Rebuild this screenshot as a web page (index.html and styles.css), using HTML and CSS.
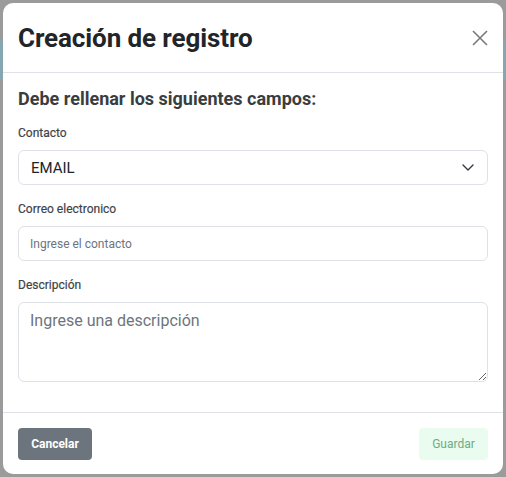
FILE: index.html
```html
<!DOCTYPE html>
<html lang="es">
<head>
<meta charset="utf-8">
<title>Creación de registro</title>
<link rel="stylesheet" href="styles.css">
</head>
<body>
<div class="modal">
  <div class="modal-header">
    <h1 class="modal-title">Creación de registro</h1>
    <button class="close" type="button" aria-label="Cerrar">
      <svg width="16" height="16" viewBox="0 0 16 16"><path d="M1 1L15 15M15 1L1 15" stroke="#7a7a7a" stroke-width="1.6" fill="none"/></svg>
    </button>
  </div>
  <div class="modal-body">
    <h2 class="intro">Debe rellenar los siguientes campos:</h2>
    <div class="group">
      <label class="label">Contacto</label>
      <div class="select">
        <span class="select-value">EMAIL</span>
        <svg class="chevron" width="12" height="7" viewBox="0 0 12 7"><path d="M1 1L6 6L11 1" stroke="#343a40" stroke-width="1.4" fill="none" stroke-linecap="round" stroke-linejoin="round"/></svg>
      </div>
    </div>
    <div class="group">
      <label class="label">Correo electronico</label>
      <input class="input" type="text" placeholder="Ingrese el contacto">
    </div>
    <div class="group">
      <label class="label">Descripción</label>
      <textarea class="textarea" placeholder="Ingrese una descripción"></textarea>
    </div>
  </div>
  <div class="modal-footer">
    <button class="btn btn-cancel" type="button">Cancelar</button>
    <button class="btn btn-save" type="button">Guardar</button>
  </div>
</div>
</body>
</html>
```
FILE: styles.css
```css
html, body {
  margin: 0;
  padding: 0;
}
body {
  width: 506px;
  height: 477px;
  overflow: hidden;
  font-family: Roboto, "Liberation Sans", sans-serif;
  background:
    linear-gradient(to bottom, transparent 0, transparent 40px, #86a6b2 40px, #86a6b2 80px, transparent 80px),
    #9b9b9b;
  padding-top: 3px;
  box-sizing: border-box;
}
.modal {
  margin: 0 3px;
  width: 500px;
  height: 471px;
  background: #fff;
  border-radius: 10px;
  display: flex;
  flex-direction: column;
  box-sizing: border-box;
}
.modal-header {
  height: 70px;
  box-sizing: border-box;
  border-bottom: 1px solid #dee2e6;
  display: flex;
  align-items: center;
  justify-content: space-between;
  padding: 0 15px;
}
.modal-title {
  margin: 0;
  font-size: 26px;
  font-weight: 700;
  color: #212529;
  line-height: 32px;
  letter-spacing: -0.1px;
}
.close {
  border: 0;
  background: none;
  padding: 0;
  width: 16px;
  height: 16px;
  display: flex;
}
.modal-body {
  padding: 15px 15px 30px;
  flex: 1;
}
.intro {
  margin: 0 0 15px;
  font-size: 18px;
  line-height: 22px;
  font-weight: 700;
  color: #3a3d40;
}
.group {
  display: flex;
  flex-direction: column;
  margin-bottom: 16px;
}
.group:last-child {
  margin-bottom: 0;
}
.label {
  font-size: 12px;
  line-height: 16px;
  color: #3f4347;
  font-weight: 400;
  margin-bottom: 9px;
  -webkit-text-stroke: 0.2px #3f4347;
}
.select, .input, .textarea {
  box-sizing: border-box;
  border: 1px solid #dee2e6;
  border-radius: 6px;
  width: 470px;
  background: #fff;
  font-family: Roboto, "Liberation Sans", sans-serif;
}
.select {
  height: 35px;
  display: flex;
  align-items: center;
  justify-content: space-between;
  padding: 0 13px 0 12px;
}
.select-value {
  font-size: 15px;
  color: #212529;
}
.input {
  height: 35px;
  padding: 0 11px;
  font-size: 12px;
  color: #212529;
  outline: none;
}
.input::placeholder {
  color: #6c757d;
}
.textarea {
  height: 80px;
  padding: 8px 11px;
  font-size: 16px;
  resize: vertical;
  outline: none;
  display: block;
}
.textarea::placeholder {
  color: #6c757d;
}
.modal-footer {
  border-top: 1px solid #dee2e6;
  padding: 15px 15px 14px;
  display: flex;
  justify-content: space-between;
  align-items: center;
}
.btn {
  height: 32px;
  border: 0;
  border-radius: 4px;
  font-family: Roboto, "Liberation Sans", sans-serif;
  font-size: 12px;
  padding: 0 12px;
}
.btn-cancel {
  width: 74px;
  background: #6c757d;
  color: #fff;
  font-weight: 700;
}
.btn-save {
  width: 69px;
  background: #e9fcef;
  color: #6eab86;
  font-weight: 400;
}
```
